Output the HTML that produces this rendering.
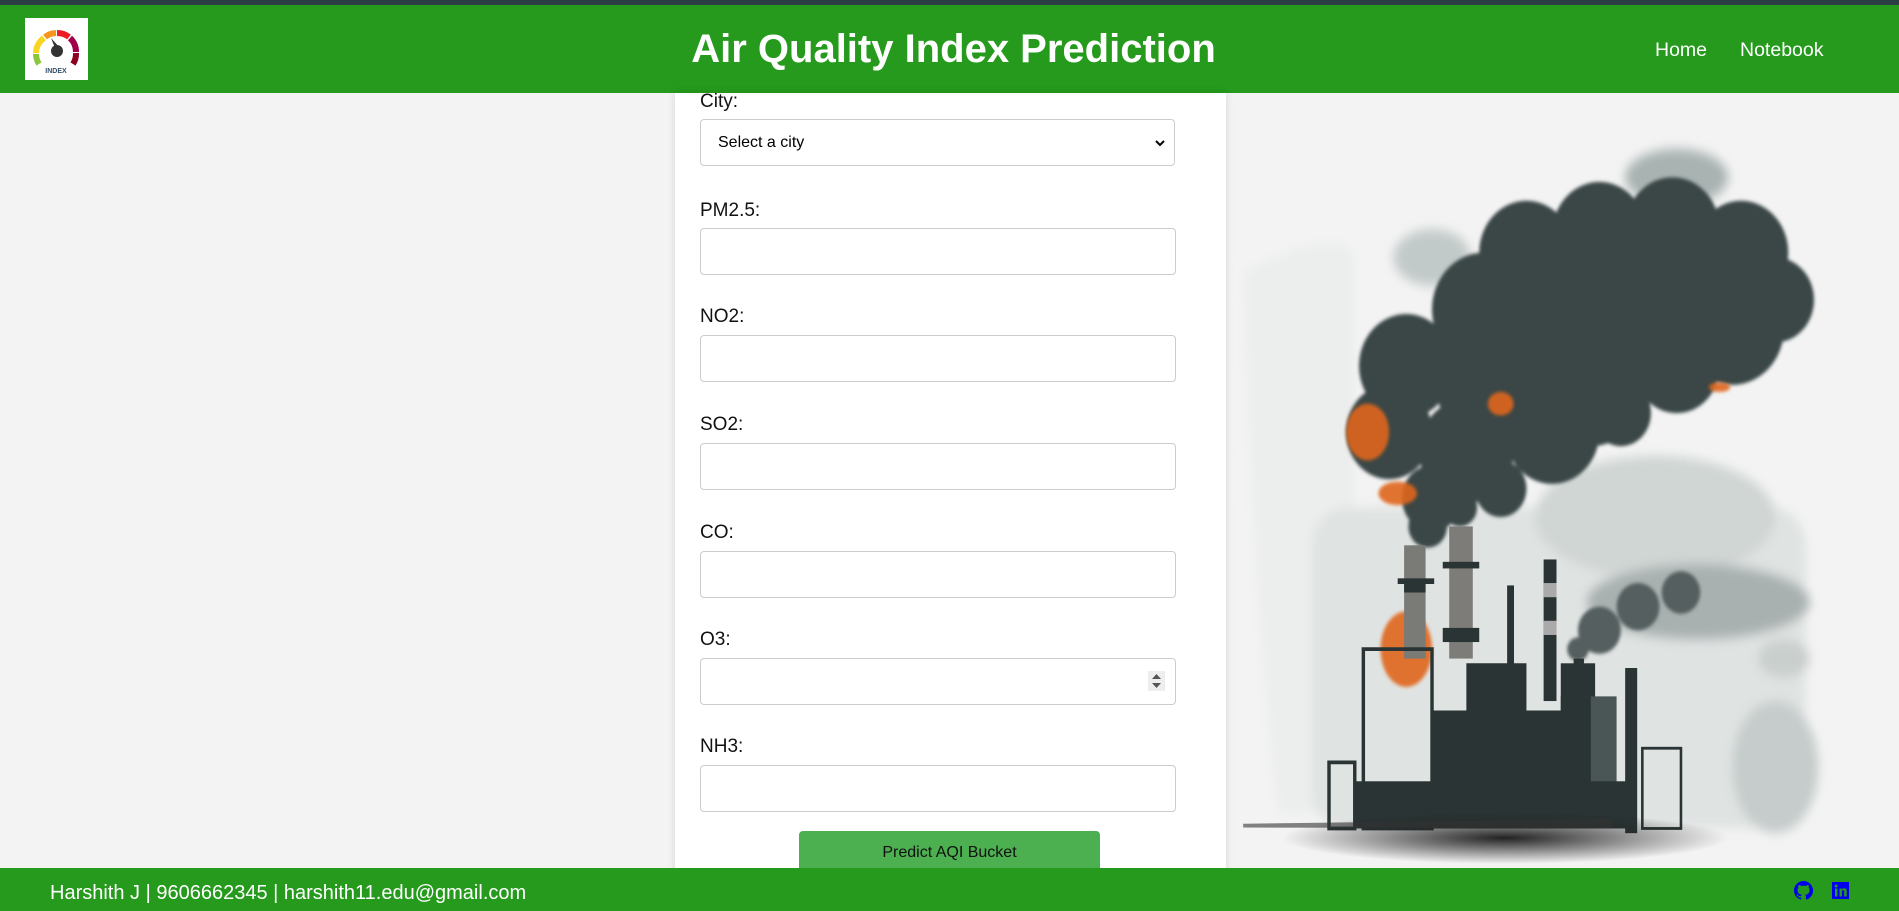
<!DOCTYPE html>
<html><head><meta charset="utf-8"><style>
*{box-sizing:border-box;margin:0;padding:0}
html,body{width:1899px;height:911px;overflow:hidden;background:#f3f3f3;font-family:"Liberation Sans",Arial,sans-serif}
.topbar{position:absolute;left:0;top:0;width:1899px;height:5px;background:#2c3d45}
header{position:absolute;left:0;top:5px;width:1899px;height:88px;background:#259a1c}
.logo{position:absolute;left:25px;top:13px;width:63px;height:62px;background:#fff}
h1{position:absolute;left:0;width:1899px;top:21px;text-align:center;color:#fff;font-size:40px;font-weight:bold;line-height:46px;padding-left:8px}
.nav{position:absolute;top:34px;color:#fff;font-size:19.5px;line-height:22px}
.card{position:absolute;left:675px;top:93px;width:551px;height:800px;background:#fff;box-shadow:0 0 8px rgba(0,0,0,.12)}
label{position:absolute;left:700px;font-size:19px;color:#111;line-height:22px;margin-top:1px}
.in{position:absolute;left:700px;width:476px;height:47px;border:1px solid #ccc;border-radius:4px;background:#fff}
.sel{width:475px}
.sel span{position:absolute;left:17px;top:14px;font-size:16px;color:#000}
.btn{position:absolute;left:799px;top:831px;width:301px;height:45px;background:#4caf50;border-radius:4px 4px 0 0;text-align:center;font-size:16px;line-height:44px;color:#111}
footer{position:absolute;left:0;top:868px;width:1899px;height:43px;background:#259a1c}
.ft{position:absolute;left:50px;top:14px;color:#fff;font-size:20px;line-height:22px}
</style></head><body>
<div class="topbar"></div>
<header>
<div class="logo"><svg width="63" height="62" viewBox="0 0 63 62">
<path d="M14 46 A19 19 0 0 1 11 36" stroke="#8cc63f" stroke-width="6" fill="none"/>
<path d="M11 35 A19 19 0 0 1 19 20" stroke="#f9d423" stroke-width="6" fill="none"/>
<path d="M20 19 A19 19 0 0 1 31 15" stroke="#f7941d" stroke-width="6" fill="none"/>
<path d="M32 15 A19 19 0 0 1 44 19" stroke="#ed1c24" stroke-width="6" fill="none"/>
<path d="M45 20 A19 19 0 0 1 51 34" stroke="#a0004a" stroke-width="6" fill="none"/>
<path d="M51 35 A19 19 0 0 1 48 46" stroke="#8b0020" stroke-width="6" fill="none"/>
<circle cx="32" cy="33" r="6" fill="#333"/><path d="M26 20 L30 30 L35 30 Z" fill="#333"/>
<text x="31" y="55" font-size="7" font-weight="bold" text-anchor="middle" fill="#34506b" font-family="Liberation Sans">INDEX</text>
</svg></div>
<h1>Air Quality Index Prediction</h1>
<div class="nav" style="left:1655px">Home</div>
<div class="nav" style="left:1740px">Notebook</div>
</header>
<div class="card"></div>
<label style="top:90px">City:</label>
<div class="in sel" style="top:119px"><span>Select a city</span><svg style="position:absolute;right:8px;top:17px" width="12" height="12" viewBox="0 0 12 12"><path d="M2 4 L6 8 L10 4" stroke="#000" stroke-width="2" fill="none"/></svg></div>
<label style="top:199px">PM2.5:</label><div class="in" style="top:228px"></div>
<label style="top:305px">NO2:</label><div class="in" style="top:335px"></div>
<label style="top:413px">SO2:</label><div class="in" style="top:443px"></div>
<label style="top:521px">CO:</label><div class="in" style="top:551px"></div>
<label style="top:628px">O3:</label><div class="in" style="top:658px"><div style="position:absolute;right:10px;top:12px;width:17px;height:20px;background:#eee"><svg width="17" height="20" viewBox="0 0 17 20"><path d="M4 8 L8.5 3 L13 8Z M4 12 L8.5 17 L13 12Z" fill="#555"/></svg></div></div>
<label style="top:735px">NH3:</label><div class="in" style="top:765px"></div>
<div class="btn">Predict AQI Bucket</div>

<svg style="position:absolute;left:1226px;top:130px" width="673" height="740" viewBox="0 0 1568 1568" preserveAspectRatio="none">
<defs><filter id="b"><feGaussianBlur stdDeviation="12"/></filter><filter id="b2"><feGaussianBlur stdDeviation="4"/></filter>
<radialGradient id="sh" cx="0.5" cy="0.5" r="0.5"><stop offset="0" stop-color="#222"/><stop offset="1" stop-color="#222" stop-opacity="0"/></radialGradient></defs>
<g filter="url(#b)" fill="#e4e8e7">
<path d="M40 300 Q250 200 300 260 L300 1450 L120 1450 Q60 1000 40 300Z" fill="#eceeed"/>
<rect x="200" y="800" width="1150" height="680" rx="80" fill="#dfe3e2"/>
<ellipse cx="1000" cy="820" rx="280" ry="130" fill="#d0d6d4"/>
<ellipse cx="1100" cy="1000" rx="260" ry="80" fill="#a9b1b0"/>
<ellipse cx="1300" cy="1120" rx="60" ry="40" fill="#c9cfcd"/>
<ellipse cx="1280" cy="1350" rx="100" ry="140" fill="#c5cccb"/>
<ellipse cx="480" cy="270" rx="90" ry="60" fill="#c2cac9"/>
<ellipse cx="1050" cy="100" rx="120" ry="60" fill="#a9b3b2"/>
</g>
<g fill="#3b4646" filter="url(#b2)">
<circle cx="700" cy="260" r="110"/><circle cx="870" cy="220" r="110"/><circle cx="1040" cy="210" r="110"/><circle cx="1200" cy="260" r="110"/><circle cx="1280" cy="360" r="90"/>
<circle cx="600" cy="380" r="120"/><circle cx="800" cy="380" r="140"/><circle cx="1000" cy="360" r="140"/><circle cx="1180" cy="420" r="120"/>
<circle cx="420" cy="500" r="110"/><circle cx="620" cy="540" r="130"/><circle cx="850" cy="540" r="130"/><circle cx="1050" cy="500" r="100"/>
<circle cx="380" cy="640" r="100"/><circle cx="560" cy="680" r="110"/><circle cx="760" cy="640" r="110"/><circle cx="920" cy="600" r="70"/>
<circle cx="480" cy="780" r="70"/><circle cx="470" cy="840" r="45"/><circle cx="545" cy="800" r="40"/><circle cx="640" cy="760" r="60"/>
</g>
<g fill="#e0661a" filter="url(#b2)" opacity=".9">
<ellipse cx="330" cy="640" rx="50" ry="60"/><ellipse cx="400" cy="770" rx="45" ry="25"/><ellipse cx="640" cy="580" rx="30" ry="25"/><ellipse cx="1150" cy="545" rx="25" ry="10"/>
<ellipse cx="420" cy="1100" rx="60" ry="80"/><ellipse cx="580" cy="1330" rx="80" ry="30"/>
</g>
<g fill="#555f5f" filter="url(#b2)"><circle cx="870" cy="1060" r="50"/><circle cx="960" cy="1010" r="50"/><circle cx="1060" cy="980" r="45"/><circle cx="820" cy="1100" r="25"/></g>
<g fill="#2a3434">
<rect x="415" y="880" width="50" height="240" fill="#7a7a76"/><rect x="415" y="960" width="50" height="20"/><rect x="400" y="950" width="85" height="12"/>
<rect x="520" y="840" width="55" height="280" fill="#7e7c78"/><rect x="505" y="915" width="85" height="14"/><rect x="505" y="1055" width="85" height="30"/>
<rect x="740" y="910" width="30" height="300"/><rect x="740" y="960" width="30" height="30" fill="#aaa"/><rect x="740" y="1040" width="30" height="30" fill="#aaa"/>
<rect x="655" y="965" width="16" height="260"/><rect x="810" y="1120" width="24" height="120"/><rect x="930" y="1140" width="28" height="350"/>
<path d="M240 1340 L300 1340 L300 1480 L240 1480Z M320 1100 L480 1100 L480 1480 L320 1480Z" fill="none" stroke="#2a3434" stroke-width="8"/>
<path d="M480 1230 L780 1230 L780 1200 L860 1200 L860 1480 L480 1480Z"/>
<path d="M560 1130 L700 1130 L700 1230 L560 1230Z"/>
<rect x="780" y="1130" width="80" height="100"/>
<path d="M850 1200 L910 1200 L910 1400 L850 1400Z" fill="#4a5555"/>
<rect x="970" y="1310" width="90" height="170" fill="none" stroke="#2a3434" stroke-width="6"/>
<rect x="300" y="1380" width="650" height="100"/>
</g>
<ellipse cx="650" cy="1500" rx="520" ry="55" fill="url(#sh)"/>
<path d="M40 1470 L900 1460 L900 1480 L40 1478Z" fill="#333" opacity=".6"/>
</svg>

<footer>
<div class="ft">Harshith J | 9606662345 | harshith11.edu@gmail.com</div>
<svg style="position:absolute;left:1794px;top:13px" width="19" height="19" viewBox="0 0 16 16"><path fill="#0000ee" d="M8 0C3.58 0 0 3.58 0 8c0 3.54 2.29 6.530 5.47 7.590.4.07.55-.17.55-.38v-1.33c-2.23.48-2.7-1.070-2.7-1.070-.36-.92-.89-1.170-.89-1.170-.73-.5.06-.49.06-.49.8.06 1.23.83 1.23.83.72 1.22 1.87.87 2.33.66.07-.52.28-.87.51-1.070-1.780-.2-3.640-.89-3.640-3.950 0-.87.31-1.590.82-2.150-.08-.2-.36-1.020.08-2.120 0 0 .67-.21 2.2.82a7.6 7.6 0 0 1 4 0c1.53-1.040 2.2-.82 2.2-.82.44 1.1.16 1.92.08 2.12.51.56.82 1.27.82 2.15 0 3.07-1.870 3.750-3.650 3.950.29.25.54.73.54 1.48v2.2c0 .21.15.46.55.38A8 8 0 0 0 16 8c0-4.420-3.580-8-8-8z"/></svg>
<svg style="position:absolute;left:1832px;top:14px" width="17" height="17" viewBox="0 0 17 17"><rect width="17" height="17" fill="#0000ee"/><rect x="3" y="6.5" width="2.5" height="8" fill="#259a1c"/><circle cx="4.2" cy="4" r="1.5" fill="#259a1c"/><path d="M7.5 6.5h2.3v1.2c.5-.9 1.4-1.4 2.5-1.4 2 0 2.4 1.3 2.4 3v5.2h-2.5v-4.6c0-1-.2-1.7-1.1-1.7-1 0-1.2.8-1.2 1.7v4.6H7.5z" fill="#259a1c"/></svg>
</footer>
</body></html>
